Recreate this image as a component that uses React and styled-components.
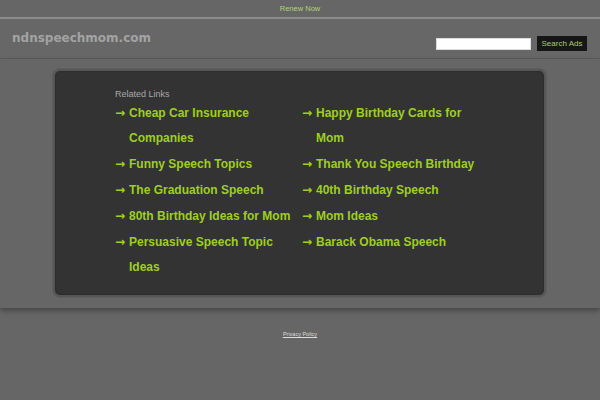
import React from "react";
import styled, { createGlobalStyle } from "styled-components";

const GlobalStyle = createGlobalStyle`
  html, body {
    margin: 0;
    padding: 0;
    background: #666666;
    font-family: "Liberation Sans", Arial, sans-serif;
  }
`;

const leftLinks = [
  "Cheap Car Insurance Companies",
  "Funny Speech Topics",
  "The Graduation Speech",
  "80th Birthday Ideas for Mom",
  "Persuasive Speech Topic Ideas",
];

const rightLinks = [
  "Happy Birthday Cards for Mom",
  "Thank You Speech Birthday",
  "40th Birthday Speech",
  "Mom Ideas",
  "Barack Obama Speech",
];

const TopBar = styled.div`
  height: 17px;
  display: flex;
  align-items: center;
  justify-content: center;
  border-bottom: 2px solid #8c8c8c;
  font-size: 7.5px;
  color: #b4d27a;
`;

const Header = styled.header`
  height: 40px;
  box-sizing: border-box;
  display: flex;
  justify-content: space-between;
  align-items: flex-start;
  padding: 12px 13px 0 12px;
  border-bottom: 1px solid #5a5a5a;
  background: #676767;
`;

const Domain = styled.div`
  font-family: "DejaVu Sans", Verdana, sans-serif;
  font-weight: bold;
  font-size: 12px;
  line-height: 14px;
  color: #a3a3a3;
`;

const SearchForm = styled.form`
  display: flex;
  align-items: center;
  gap: 6px;
  margin-top: 5px;
`;

const SearchInput = styled.input`
  width: 95px;
  height: 12px;
  box-sizing: border-box;
  border: 1px solid #dcdcdc;
  background: #ffffff;
  padding: 0;
  margin: 0;
`;

const SearchButton = styled.button`
  width: 50px;
  height: 15px;
  padding: 0;
  border: none;
  background: #161616;
  color: #a9cf72;
  font-family: "Liberation Sans", Arial, sans-serif;
  font-size: 8px;
`;

const Main = styled.main`
  position: relative;
  z-index: 1;
  padding: 10px 0 11px;
  background: #666666;
  box-shadow: 0 3px 5px rgba(0, 0, 0, 0.3);
`;

const Panel = styled.section`
  width: 493px;
  box-sizing: border-box;
  margin: 0 0 0 53px;
  padding: 18px 0 14px 60px;
  border: 2px solid #565656;
  border-radius: 7px;
  box-shadow: 0 0 0 1px #5f5f5f, inset 0 0 2px rgba(0, 0, 0, 0.4);
  background: #333333;
`;

const Title = styled.div`
  font-size: 9px;
  line-height: 11px;
  color: #a8a8a8;
  margin-bottom: 1px;
`;

const Columns = styled.div`
  display: grid;
  grid-template-columns: 187px 187px;
`;

const LinkList = styled.ul`
  list-style: none;
  margin: 0;
  padding: 0;
`;

const Item = styled.li`
  display: grid;
  grid-template-columns: 14px 1fr;
  margin-bottom: 1px;
  font-size: 12px;
  font-weight: bold;
  line-height: 25px;
  color: #9fcf1e;
`;

const Arrow = styled.span`
  font-family: "DejaVu Sans", sans-serif;
  font-weight: bold;
  font-size: 12px;
`;

const LinkText = styled.a`
  color: inherit;
  text-decoration: none;
`;

const Footer = styled.footer`
  padding-top: 22px;
  font-size: 5.5px;
  line-height: 8px;
  text-align: center;
`;

const FooterLink = styled.a`
  color: #dddddd;
  text-decoration: underline;
`;

const Column = ({ links }) => (
  <LinkList>
    {links.map((text) => (
      <Item key={text}>
        <Arrow>→</Arrow>
        <LinkText href="#">{text}</LinkText>
      </Item>
    ))}
  </LinkList>
);

export default function App() {
  return (
    <>
      <GlobalStyle />
      <TopBar>Renew Now</TopBar>
      <Header>
        <Domain>ndnspeechmom.com</Domain>
        <SearchForm onSubmit={(e) => e.preventDefault()}>
          <SearchInput type="text" />
          <SearchButton type="submit">Search Ads</SearchButton>
        </SearchForm>
      </Header>
      <Main>
        <Panel>
          <Title>Related Links</Title>
          <Columns>
            <Column links={leftLinks} />
            <Column links={rightLinks} />
          </Columns>
        </Panel>
      </Main>
      <Footer>
        <FooterLink href="#">Privacy Policy</FooterLink>
      </Footer>
    </>
  );
}
